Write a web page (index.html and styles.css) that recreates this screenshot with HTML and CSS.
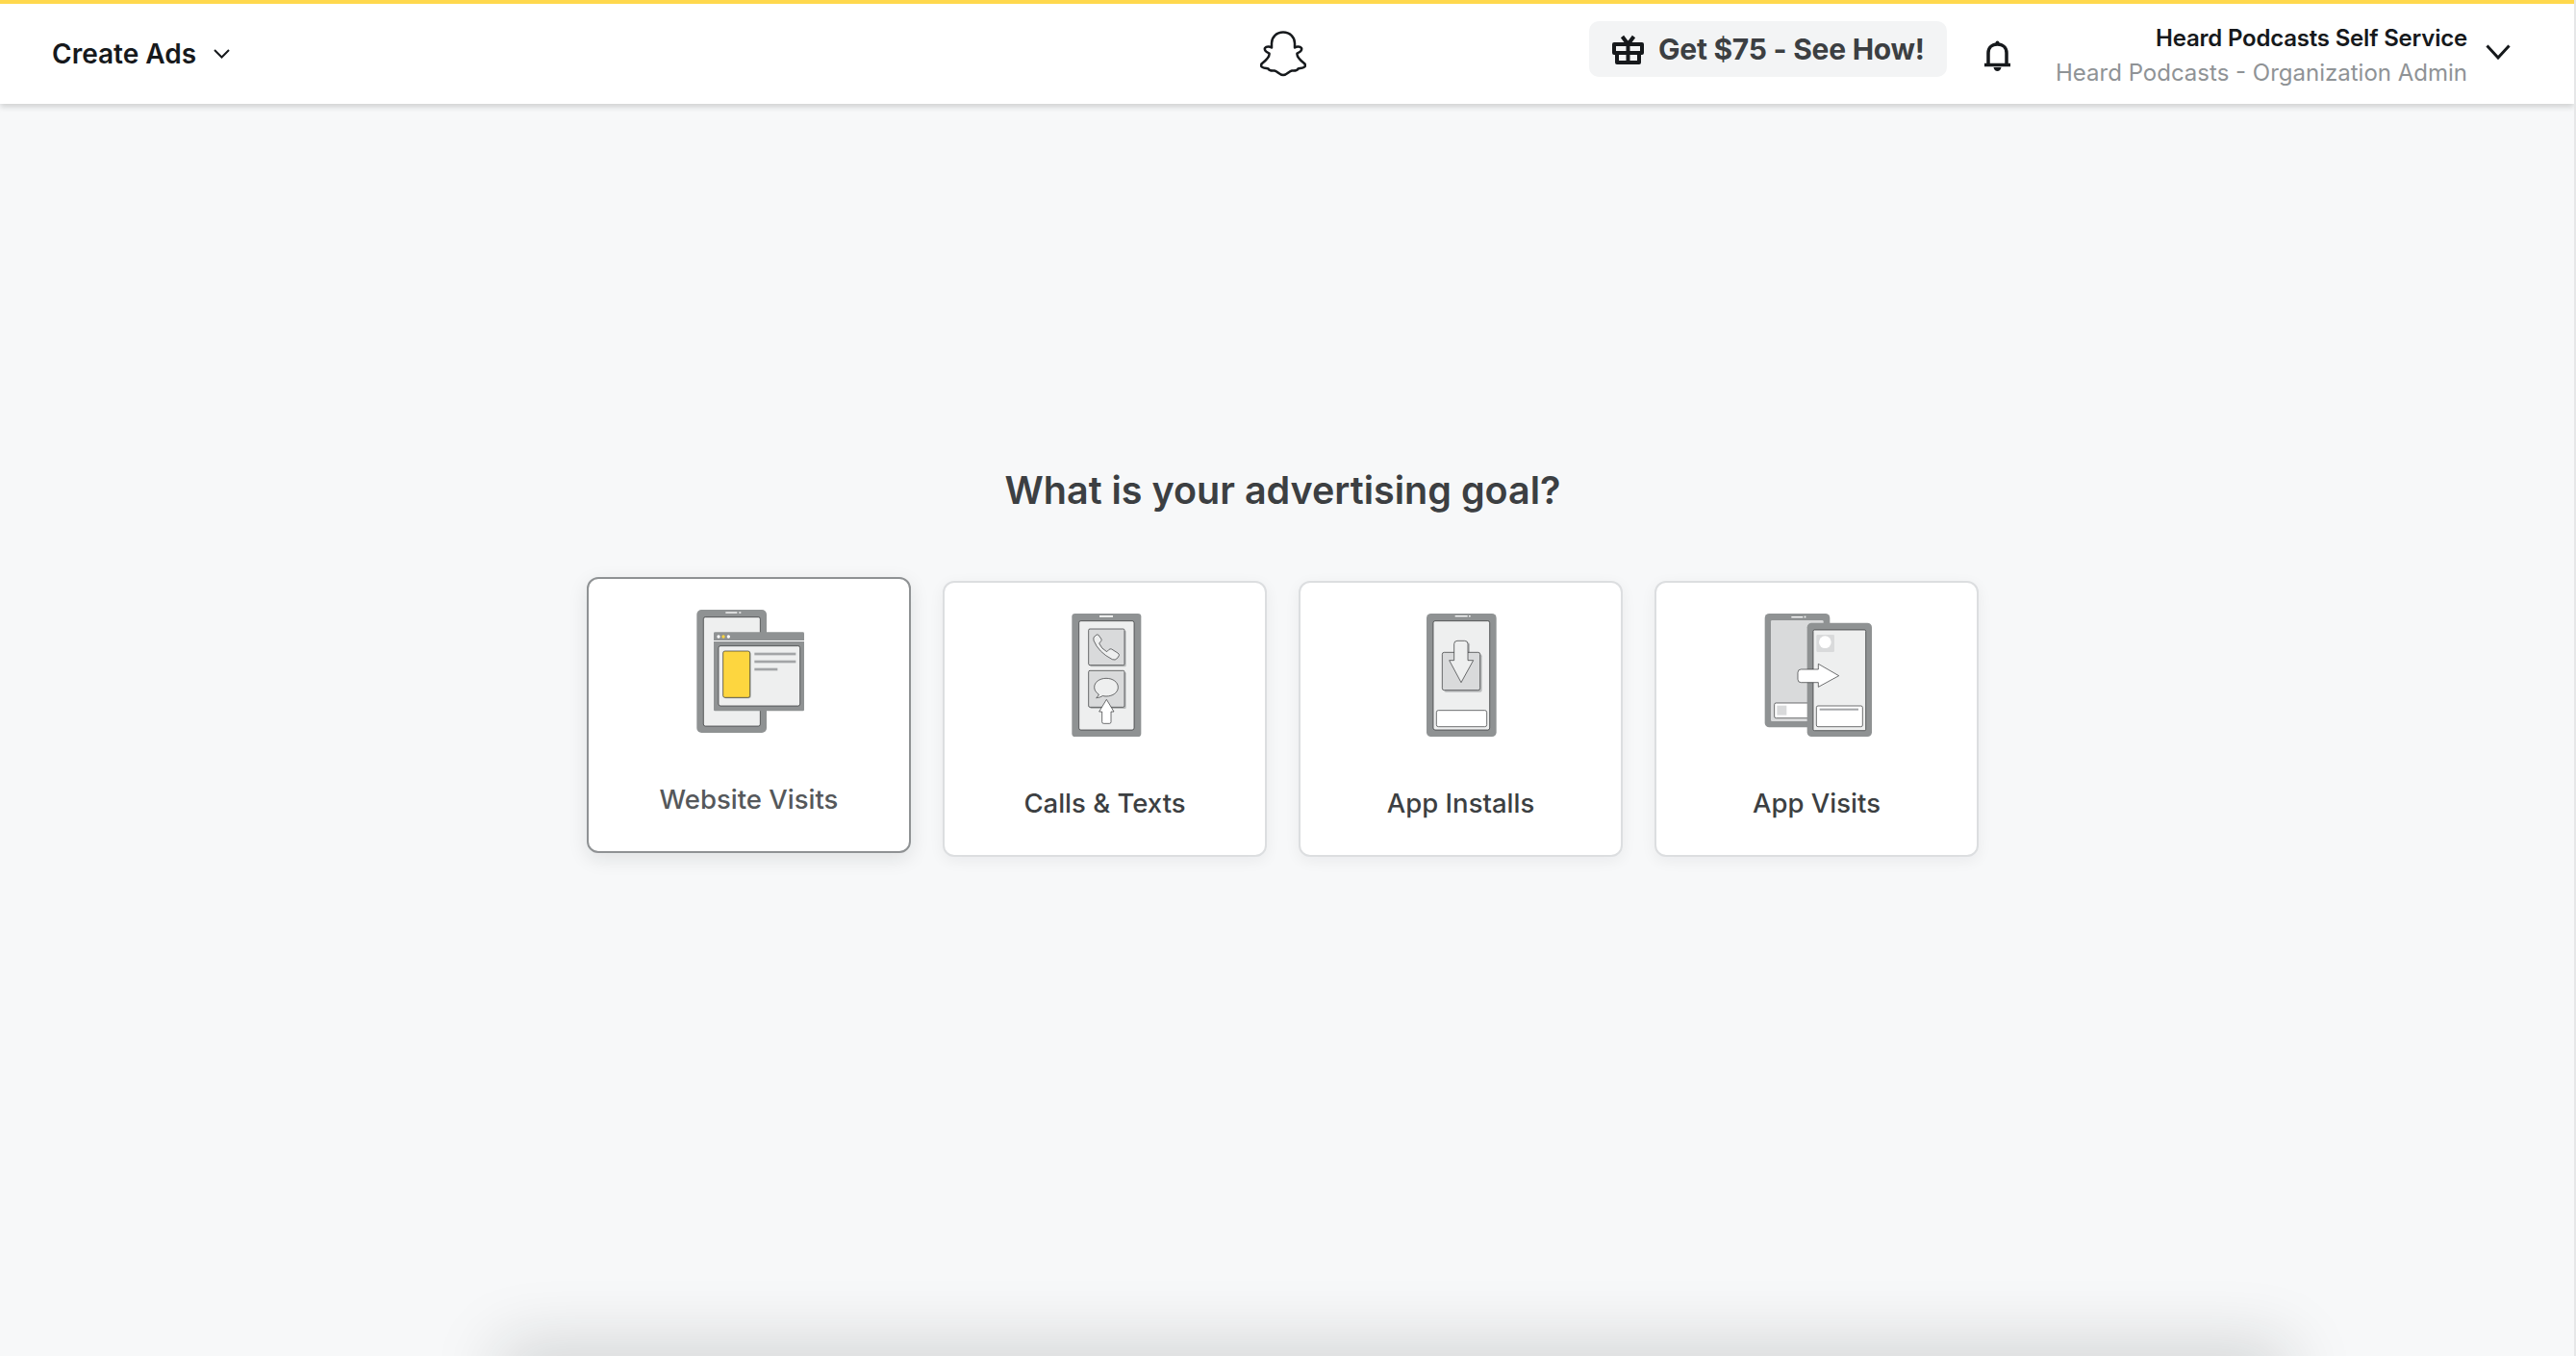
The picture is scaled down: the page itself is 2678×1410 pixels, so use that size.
FILE: index.html
```html
<!DOCTYPE html>
<html>
<head>
    <title>Create Ads</title>
    <link rel="stylesheet" href="styles.css">
</head>
<body>
    <header class="top-bar">
        <div class="bar-left">
            <span class="create-ads">Create Ads</span>
            <svg class="chevron-small" viewBox="0 0 17 10"><path d="M1 1l7.500 7.500L16 1"/></svg>
        </div>
        <svg class="ghost" viewBox="0 0 48 48">
            <path d="M24 1.500C31 1.500 36 6.500 36 13L36 17.500C38 16 41.500 16 43 18C44 20.500 40.500 22.500 38.500 23.500C38 26 41 30 46 34C47.500 35.500 47.500 37 45.500 38C43.500 39 41 39 39.500 39.500C38.500 42 36 41.500 33 41.500C30 42 28 46 24 46C20 46 18 42 15 41.500C12 41.500 9.500 42 8.500 39.500C7 39 4.500 39 2.500 38C.5 37 .5 35.500 2 34C7 30 10 26 9.500 23.500C7.500 22.500 4 20.500 5 18C6.500 16 10 16 12 17.500L12 13C12 6.500 17 1.500 24 1.500Z"/>
        </svg>
        <div class="bar-right">
            <div class="promo">
                <svg class="gift" viewBox="0 0 33 31"><path d="M2 10h29v9H2zM5 19h23v10H5zM16.500 10v19M16.500 10L10.500 2M16.500 10L22.500 2"/></svg>
                <span>Get $75 - See How!</span>
            </div>
            <svg class="bell" viewBox="0 0 29 32">
                <path class="bell-line" d="M5 25V13C5 7.500 9 4 14.500 4S24 7.500 24 13v12M1 25.500h27"/>
                <circle cx="14.500" cy="2.500" r="2"/>
                <path d="M10.500 28h8c-.5 2.500-2 4-4 4s-3.500-1.500-4-4z"/>
            </svg>
            <div class="account">
                <div class="account-name">Heard Podcasts Self Service</div>
                <div class="account-role">Heard Podcasts - Organization Admin</div>
            </div>
            <svg class="chevron" viewBox="0 0 26 16"><path d="M1.500 1.500L13 14 24.500 1.500"/></svg>
        </div>
    </header>

    <main class="goal-page">
        <h1>What is your advertising goal?</h1>
        <div class="goal-list">
            <div class="goal-card active">
                <svg class="goal-icon" viewBox="365 132 342 384">
                    <rect class="frame" x="372" y="132" width="218" height="384" rx="15"/>
                    <rect class="white" x="462" y="139" width="36" height="4"/>
                    <rect class="white" x="504" y="139" width="6" height="4"/>
                    <rect class="screen" x="393" y="155" width="177" height="340" rx="6"/>
                    <rect class="frame" x="425" y="202" width="282" height="246" rx="4"/>
                    <rect class="white" x="425" y="228" width="282" height="3"/>
                    <circle class="white" cx="440" cy="216" r="5"/>
                    <circle class="yellow" cx="455" cy="216" r="5"/>
                    <circle class="white" cx="471" cy="216" r="5"/>
                    <rect class="screen" x="440" y="245" width="254" height="187" rx="6"/>
                    <rect class="drop" x="457" y="264" width="84" height="145" rx="6"/>
                    <rect class="yellow line" x="454" y="261" width="84" height="145" rx="6"/>
                    <rect class="bar" x="552" y="266" width="129" height="8"/>
                    <rect class="bar" x="552" y="290" width="129" height="8"/>
                    <rect class="bar" x="552" y="314" width="72" height="8"/>
                </svg>
                <span class="goal-label">Website Visits</span>
            </div>
            <div class="goal-card">
                <svg class="goal-icon" viewBox="365 129 342 384">
                    <rect class="frame" x="432" y="129" width="216" height="384" rx="10"/>
                    <rect class="white" x="518" y="135" width="42" height="5"/>
                    <rect class="screen" x="454" y="152" width="172" height="340" rx="6"/>
                    <rect class="drop" x="489" y="182" width="112" height="113" rx="4"/>
                    <rect class="tile" x="484" y="177" width="112" height="113" rx="4"/>
                    <path class="soft" d="M505 198q-8 5-5 15 15 37 58 59 9 4 16-4l5-8q1-5-4-8l-19-12q-5-2-9 2l-6 6q-16-8-24-26l6-7q3-4 0-8l-9-12q-4-2-9 3z"/>
                    <rect class="drop" x="489" y="312" width="112" height="114" rx="4"/>
                    <rect class="tile" x="484" y="307" width="112" height="114" rx="4"/>
                    <path class="soft" d="M539 331c21 0 37 12 37 28s-16 28-37 28c-4 0-8-.5-11-1.500-5 3.500-12 6-20 6.500 4-3 7-7 8-11-8-5-14-13-14-22 0-16 16-28 37-28z"/>
                    <path class="arrow" d="M540 397l23 38h-9v32q0 5-5 5h-18q-5 0-5-5v-32h-9z"/>
                </svg>
                <span class="goal-label">Calls &amp; Texts</span>
            </div>
            <div class="goal-card">
                <svg class="goal-icon" viewBox="365 129 342 384">
                    <rect class="frame" x="428" y="129" width="218" height="384" rx="14"/>
                    <rect class="white" x="517" y="135" width="39" height="4"/>
                    <rect class="white" x="560" y="135" width="5" height="4"/>
                    <rect class="screen" x="449" y="152" width="176" height="340" rx="6"/>
                    <rect class="drop" x="483" y="256" width="118" height="118" rx="6"/>
                    <rect class="drop" x="520" y="220" width="43" height="40" rx="6"/>
                    <rect class="tile" x="477" y="250" width="118" height="118" rx="6"/>
                    <path class="soft" d="M524 214h23q10 0 10 10v51h17l-38 69-37-69h15v-51q0-10 10-10z"/>
                    <rect class="button" x="459" y="431" width="157" height="51" rx="6"/>
                </svg>
                <span class="goal-label">App Installs</span>
            </div>
            <div class="goal-card">
                <svg class="goal-icon" viewBox="365 129 342 384">
                    <rect class="frame" x="373" y="129" width="203" height="355" rx="14"/>
                    <rect class="white" x="456" y="138" width="36" height="4"/>
                    <rect class="white" x="496" y="137" width="5" height="5"/>
                    <rect class="back-screen" x="392" y="150" width="164" height="315" rx="4"/>
                    <rect class="button" x="403" y="408" width="120" height="47" rx="5"/>
                    <rect class="back-screen" x="411" y="416" width="30" height="30"/>
                    <rect class="frame" x="505" y="158" width="202" height="355" rx="14"/>
                    <rect class="screen" x="524" y="180" width="164" height="314" rx="4"/>
                    <rect class="back-screen" x="534" y="195" width="56" height="54" rx="4"/>
                    <circle class="white" cx="561" cy="218" r="19"/>
                    <path class="arrow" d="M486 303h54v-17l64 37-64 35v-14h-54q-10 0-10-10v-21q0-10 10-10z"/>
                    <rect class="button" x="534" y="417" width="144" height="65" rx="5"/>
                    <rect class="bar" x="544" y="425" width="121" height="6"/>
                </svg>
                <span class="goal-label">App Visits</span>
            </div>
        </div>
    </main>

    <div class="bottom-shade"></div>
</body>
</html>
```

FILE: styles.css
```css
html, body {
    height: 100%;
}
body {
    margin: 0;
    overflow: hidden;
    box-sizing: border-box;
    background-color: #f7f8f9;
    border-right: 2px solid #e6e7e8;
    font-family: Inter, "Liberation Sans", sans-serif;
    color: #16191c;
}
.top-bar {
    height: 104px;
    display: flex;
    align-items: center;
    padding-left: 54px;
    position: relative;
    background-color: #fff;
    border-top: 4px solid #ffd84d;
    box-shadow: 0 3px 6px rgba(22, 25, 28, 0.18);
}
.bar-left {
    display: flex;
    align-items: center;
    width: 1256px;
}
.bar-right {
    display: flex;
    flex: 1;
    align-items: center;
    justify-content: flex-end;
}
.create-ads {
    font-size: 28px;
    font-weight: 600;
}
.chevron-small {
    width: 17px;
    height: 10px;
    margin-left: 18px;
    fill: none;
    stroke: #16191c;
    stroke-width: 2;
}
.ghost {
    width: 48px;
    height: 48px;
    fill: #fff;
    stroke: #16191c;
    stroke-width: 2.500;
    stroke-linejoin: round;
}
.promo {
    display: flex;
    flex-shrink: 0;
    align-items: center;
    width: 372px;
    height: 58px;
    box-sizing: border-box;
    padding-left: 24px;
    margin: -10px 38px 0 0;
    background-color: #f3f4f5;
    border-radius: 10px;
    font-size: 30px;
    font-weight: 700;
    letter-spacing: -0.25px;
    color: #3c3f42;
}
.gift {
    width: 33px;
    height: 31px;
    margin-right: 15px;
    fill: none;
    stroke: #16191c;
    stroke-width: 4;
    stroke-linejoin: round;
}
.bell {
    flex-shrink: 0;
    width: 29px;
    height: 32px;
    margin-top: 4px;
    fill: #16191c;
}
.bell-line {
    fill: none;
    stroke: #16191c;
    stroke-width: 3.500;
}
.account {
    flex-shrink: 0;
    width: 474px;
    text-align: right;
    margin-top: 4px;
}
.account-name {
    font-size: 24px;
    font-weight: 600;
    line-height: 36px;
    letter-spacing: -0.2px;
}
.account-role {
    font-size: 24px;
    line-height: 36px;
    color: #8f9396;
}
.chevron {
    flex-shrink: 0;
    width: 26px;
    height: 16px;
    margin: -5px 66px 0 19px;
    fill: none;
    stroke: #16191c;
    stroke-width: 3;
}
.goal-page {
    display: flex;
    flex-direction: column;
    align-items: center;
    padding: 376px 9px 0 0;
}
h1 {
    margin: 0;
    font-size: 39.500px;
    line-height: 52px;
    font-weight: 600;
    color: #3c3f42;
}
.goal-list {
    display: flex;
    gap: 33px;
    margin-top: 68px;
}
.goal-card {
    width: 337px;
    height: 287px;
    box-sizing: border-box;
    padding-top: 32px;
    display: flex;
    flex-direction: column;
    align-items: center;
    background-color: #fff;
    border: 2px solid #dcdee0;
    border-radius: 12px;
    box-shadow: 0 4px 16px rgba(22, 25, 28, 0.06);
}
.goal-card.active {
    transform: translateY(-4px);
    border-color: #8f9294;
    box-shadow: 0 6px 20px rgba(22, 25, 28, 0.1);
}
.goal-icon {
    width: 114px;
    height: 128px;
}
.goal-label {
    margin-top: 49px;
    font-size: 27.500px;
    line-height: 40px;
    font-weight: 500;
    color: #3c3f42;
}
.goal-card.active .goal-label {
    color: #55585b;
}
.frame { fill: #8f9293; }
.white { fill: #fff; }
.yellow { fill: #fdd63f; }
.line { stroke: #2a2c2e; stroke-width: 2; }
.drop { fill: #b9bbbc; }
.bar { fill: #a3a5a7; }
.screen { fill: #eeefef; stroke: #2a2c2e; stroke-width: 2; }
.back-screen { fill: #d9dadb; }
.tile { fill: #d9dadb; stroke: #2a2c2e; stroke-width: 2; }
.soft { fill: #eeefef; stroke: #2a2c2e; stroke-width: 2; stroke-linejoin: round; }
.arrow { fill: #fff; stroke: #2a2c2e; stroke-width: 2; stroke-linejoin: round; }
.button { fill: #fff; stroke: #2a2c2e; stroke-width: 2; }
.bottom-shade {
    position: fixed;
    left: 530px;
    right: 310px;
    bottom: -40px;
    height: 40px;
    box-shadow: 0 0 70px 10px rgba(22, 25, 28, 0.18);
}
```
